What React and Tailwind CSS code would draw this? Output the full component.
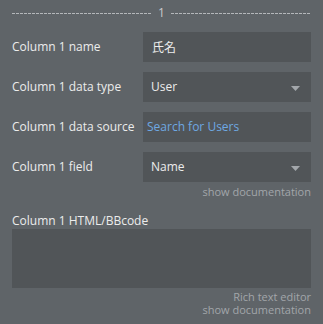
import { useState } from "react";

const Caret = () => (
   <svg width="9" height="5" viewBox="0 0 9 5" className="absolute right-[11px] top-[14px]">
      <path d="M0 0 H9 L4.5 5 Z" fill="#a3a7ab" />
   </svg>
);

const Row = ({ label, children }) => (
   <div className="flex h-[30px] items-center">
      <div className="w-[131px] shrink-0 whitespace-nowrap text-[12px] text-[#ececec]">{label}</div>
      <div className="relative h-[30px] flex-1 bg-[#515558]">{children}</div>
   </div>
);

export default function App() {
   const [name, setName] = useState("氏名");
   const dash = "h-px flex-1 bg-[repeating-linear-gradient(90deg,#b4b7ba_0_3px,transparent_3px_4px)]";

   return (
      <div className="h-[324px] w-[323px] bg-[#5f6468] px-[12px] pt-[5px] font-['Open_Sans','Noto_Sans_CJK_JP',sans-serif]">
         <div className="flex h-[16px] items-center gap-[6px] text-[#c9cbcd]">
            <div className={dash} />
            <div className="text-[12px] leading-none">1</div>
            <div className={dash} />
         </div>

         <div className="mt-[11px] flex flex-col gap-[10px]">
            <Row label="Column 1 name">
               <input value={name} onChange={e => setName(e.target.value)} className="h-full w-full bg-transparent pl-[9px] text-[12px] text-[#ececec] outline-none" />
            </Row>
            <Row label="Column 1 data type">
               <div className="flex h-full items-center pl-[8px] text-[12px] text-[#ececec]">User</div>
               <Caret />
            </Row>
            <Row label="Column 1 data source">
               <div className="flex h-full items-center pl-[4px] text-[12px] text-[#6ea8e2]">Search for Users</div>
            </Row>
            <Row label="Column 1 field">
               <div className="flex h-full items-center pl-[8px] text-[12px] text-[#ececec]">Name</div>
               <Caret />
            </Row>
         </div>

         <div className="mt-[2px] text-right text-[11px] text-[#a2a6aa]">show documentation</div>

         <div className="mt-[11px] text-[12px] leading-[17px] text-[#ececec]">Column 1 HTML/BBcode</div>
         <div className="h-[59px] w-full bg-[#515558]" />
         <div className="mt-[3px] flex flex-col items-end gap-[1px] text-[11px] leading-[12px] text-[#a2a6aa]">
            <div>Rich text editor</div>
            <div>show documentation</div>
         </div>
      </div>
   );
}
